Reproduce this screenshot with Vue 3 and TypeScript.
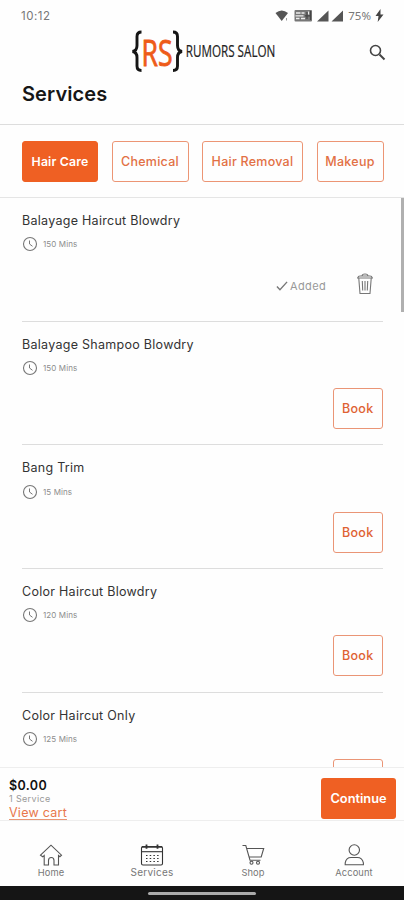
<script setup lang="ts">
interface Service {
  name: string
  mins: number
  added: boolean
}

const categories: string[] = ['Hair Care', 'Chemical', 'Hair Removal', 'Makeup']
const active = 'Hair Care'

const services: Service[] = [
  { name: 'Balayage Haircut Blowdry', mins: 150, added: true },
  { name: 'Balayage Shampoo Blowdry', mins: 150, added: false },
  { name: 'Bang Trim', mins: 15, added: false },
  { name: 'Color Haircut Blowdry', mins: 120, added: false },
  { name: 'Color Haircut Only', mins: 125, added: false },
]
</script>

<template>
  <div class="screen">
    <div class="status">
      <span class="time">10:12</span>
      <svg class="status-icons" width="70" height="14" viewBox="0 0 70 14">
        <path d="M0.500 4Q6.700 -1 13 4L6.700 12Z" fill="#555" />
        <path d="M11.500 9v2.500" stroke="#999" />
        <rect x="19.500" y="1" width="17.500" height="11.500" rx="1" fill="#777" />
        <path d="M21 4h4.500M26.500 4h3M21 9.500h3.500M26 9.500h4M33.500 2.500v3M20.500 6.800h8" stroke="#eee" stroke-width="1.300" />
        <path d="M30 6.800h5M32 3v7M35.500 2v9" stroke="#444" stroke-width="1.200" />
        <path d="M42 12.500 53.500 1.500v11zM56.500 12.500 68 1.500v11z" fill="#555" />
      </svg>
      <span class="battery">75%</span>
      <svg class="bolt" width="9" height="13" viewBox="0 0 9 13"><path d="M5.500 0 .5 7h3l-.8 6L8.500 5.500h-3z" fill="#444" /></svg>
    </div>

    <header class="brand">
      <svg class="logo" width="146" height="46" viewBox="0 0 146 46">
        <path d="M10.500 3C7 3 6 4.500 6 7.500v9c0 3.500-1.500 5.500-4.500 6 3 .5 4.500 2.500 4.500 6V37c0 3 1 4.500 4.500 4.500M42 3c3.500 0 4.500 1.500 4.500 4.500v9c0 3.500 1.500 5.500 4.500 6-3 .5-4.500 2.500-4.500 6V37c0 3-1 4.500-4.500 4.500" fill="none" stroke="#151515" stroke-width="2.900" />
        <text class="rs" x="10.500" y="36.500" textLength="31" lengthAdjust="spacingAndGlyphs">RS</text>
        <text class="salon" x="54.800" y="27.800" textLength="89.500" lengthAdjust="spacingAndGlyphs">RUMORS SALON</text>
      </svg>
      <svg class="search" width="17" height="17" viewBox="0 0 17 17" fill="none" stroke="#444">
        <circle cx="6.500" cy="6.500" r="5" stroke-width="1.600" /><path d="m10.500 10.500 5 5" stroke-width="2" />
      </svg>
    </header>
    <h1>Services</h1>

    <nav class="tabs">
      <button v-for="c in categories" :key="c" :class="{ active: c === active }">{{ c }}</button>
    </nav>

    <main class="list">
      <article v-for="s in services" :key="s.name" class="item">
        <h2>{{ s.name }}</h2>
        <div class="duration">
          <svg width="16" height="16" viewBox="0 0 16 16" fill="none" stroke="#777">
            <circle cx="8" cy="8" r="6.500" stroke-width="1.100" /><path d="M7.500 4.500V8l3 2.300" />
          </svg>
          <span>{{ s.mins }} Mins</span>
        </div>
        <div class="action">
          <template v-if="s.added">
            <svg class="check" width="12" height="12" viewBox="0 0 13 12" fill="none" stroke="#777" stroke-width="1.500"><path d="m1 6.500 3.300 3.500L12 1.500" /></svg>
            <span class="added">Added</span>
            <svg class="trash" width="18" height="22" viewBox="0 0 18 22" fill="none" stroke="#777" stroke-width="1.100">
              <path d="M1 5h16M2.800 5.500 4 20.500h10l1.200-15M2 4.500q0-1.500 2-1.500h10q2 0 2 1.500M6 3q0-2 3-2t3 2M6.300 8l.4 9.500M9 8v9.500M11.700 8l-.4 9.500" />
            </svg>
          </template>
          <button v-else class="book">Book</button>
        </div>
      </article>
      <span class="scrollbar"></span>
    </main>

    <section class="cart">
      <div>
        <div class="total">$0.00</div>
        <div class="count">1 Service</div>
        <a class="view">View cart</a>
      </div>
      <button class="continue">Continue</button>
    </section>

    <footer class="nav">
      <div class="nav-item">
        <svg width="24" height="24" viewBox="0 0 24 24"><path d="m1.500 12.200 10.500-10 10.500 10-1.600 1.500-1.400-1.200V22H15v-4.500c0-4-5.500-4-5.500 0V22H5.200v-9.500l-1.500 1.300z" /></svg>
        <span>Home</span>
      </div>
      <div class="nav-item current">
        <svg width="24" height="24" viewBox="0 0 24 24"><rect x="1.500" y="3.500" width="21" height="18.500" rx="1.500" /><path d="M2 8.700h20" /><path d="M2 3.800h20M6.500 1.500v4.200M17.500 1.500v4.200" stroke-width="1.800" /><path d="M6 12.500h13M6 15.500h13M6 18.500h13" stroke-dasharray="1.500 2.200" /></svg>
        <span>Services</span>
      </div>
      <div class="nav-item">
        <svg width="24" height="24" viewBox="0 0 24 24"><path d="M1.500 2.500h3.300l4.200 14.700h10.500M5.700 5.500h17L20.200 14H8.300" /><circle cx="10.500" cy="19.800" r="1.500" /><circle cx="17" cy="19.800" r="1.500" /></svg>
        <span>Shop</span>
      </div>
      <div class="nav-item">
        <svg width="24" height="24" viewBox="0 0 24 24"><circle cx="12.300" cy="7" r="5.200" /><path d="M3.200 21.800v-2Q4.200 14.500 9 14.500h6.400q4.800 0 6 5.300v2z" /></svg>
        <span>Account</span>
      </div>
    </footer>
    <div class="system"><span></span></div>
  </div>
</template>

<style>
body {
  background: #fefefe;
}
</style>

<style scoped>
* {
  box-sizing: border-box;
}
.screen {
  width: 404px;
  height: 900px;
  display: flex;
  flex-direction: column;
  overflow: hidden;
  background: #fefefe;
  font-family: Inter, sans-serif;
  color: #333;
}
button {
  font-family: inherit;
  margin: 0;
  padding: 0;
  white-space: nowrap;
}
.status {
  height: 28px;
  flex: none;
  display: flex;
  align-items: center;
  padding: 3px 20px 0 21px;
  color: #777;
}
.time {
  font-size: 11.5px;
  letter-spacing: 0.5px;
}
.status-icons {
  margin-left: auto;
}
.battery {
  font: 11.5px "Noto Sans", sans-serif;
  margin-left: 3px;
}
.bolt {
  margin-left: 4px;
}
.brand {
  height: 49px;
  flex: none;
  display: flex;
  align-items: flex-start;
  padding: 1px 18px 0 131px;
}
.logo {
  overflow: visible;
}
.rs {
  font: 37px "Open Sans", sans-serif;
  fill: #ee5b18;
  stroke: #ee5b18;
  stroke-width: 0.9px;
}
.salon {
  font: 17px "Open Sans", sans-serif;
  fill: #222;
  stroke: #222;
  stroke-width: 0.2px;
}
.search {
  margin: 15px 0 0 auto;
}
h1 {
  height: 47px;
  flex: none;
  margin: 0;
  padding: 3px 0 0 22px;
  font-size: 20px;
  line-height: 28px;
  font-weight: 600;
  letter-spacing: 0.1px;
  color: #161616;
}
.tabs {
  height: 74px;
  flex: none;
  display: flex;
  align-items: flex-start;
  justify-content: space-between;
  padding: 16px 20.5px 0 22px;
  border-top: 1px solid #ddd;
  border-bottom: 1px solid #e5e5e5;
}
.tabs button {
  height: 41px;
  width: 77px;
  border: 1px solid #ec9574;
  border-radius: 3px;
  background: #fefefe;
  color: #e27045;
  font-size: 12.5px;
  font-weight: 500;
  letter-spacing: 0.25px;
}
.tabs button:nth-child(1) {
  width: 76px;
}
.tabs button:nth-child(3) {
  width: 101px;
}
.tabs button:nth-child(4) {
  width: 67px;
}
.tabs .active {
  background: #ef6023;
  border-color: #ef6023;
  color: #fff;
  font-size: 12.3px;
  font-weight: 600;
  letter-spacing: 0.15px;
}
.list {
  flex: 1;
  min-height: 0;
  overflow: hidden;
  position: relative;
  padding: 0 21px 0 22px;
}
.item {
  height: 123.7px;
  border-bottom: 1px solid #ddd;
  padding-top: 14px;
}
h2 {
  margin: 0;
  font-size: 12.5px;
  line-height: 18px;
  font-weight: 400;
  letter-spacing: 0.28px;
}
.duration {
  display: flex;
  align-items: center;
  gap: 5px;
  height: 16px;
  margin-top: 6.4px;
  color: #8c8c8c;
  font-size: 8px;
  letter-spacing: 0.1px;
}
.action {
  height: 41px;
  margin-top: 11.8px;
  display: flex;
  justify-content: flex-end;
  align-items: center;
}
.book {
  width: 50.5px;
  height: 41px;
  border: 1px solid #ea9576;
  border-radius: 3px;
  background: #fefefe;
  color: #df6233;
  font-size: 12.5px;
  font-weight: 500;
  letter-spacing: 0.25px;
}
.check {
  margin-top: 2px;
}
.added {
  font-size: 11px;
  color: #999;
  margin: 3px 0 0 2px;
  letter-spacing: 0.35px;
}
.trash {
  margin: 0 9px 1px 30px;
}
.scrollbar {
  position: absolute;
  right: 0;
  top: 0;
  width: 3px;
  height: 114px;
  background: #b0b0b0;
}
.cart {
  height: 53px;
  flex: none;
  display: flex;
  justify-content: space-between;
  padding: 10px 8px 0 9px;
  border-top: 1px solid #eee;
}
.total {
  font-size: 12.5px;
  line-height: 15px;
  font-weight: 600;
  color: #111;
  letter-spacing: 0.4px;
}
.count {
  font-size: 9px;
  line-height: 11px;
  color: #999;
  letter-spacing: 0.35px;
}
.view {
  display: block;
  font-size: 12.5px;
  line-height: 17px;
  height: 16px;
  color: #e8774b;
  border-bottom: 1px solid #e99674;
  letter-spacing: 0.25px;
}
.continue {
  width: 75px;
  height: 41px;
  border: 0;
  border-radius: 3px;
  background: #ef6023;
  color: #fff;
  font-size: 12.8px;
  font-weight: 600;
}
.nav {
  height: 66px;
  flex: none;
  display: grid;
  grid-template-columns: repeat(4, 101px);
  border-top: 1px solid #eee;
  padding-top: 22px;
}
.nav-item {
  display: flex;
  flex-direction: column;
  align-items: center;
  font-size: 9.3px;
  line-height: 12px;
  color: #777;
  padding-left: 1px;
}
.nav-item span {
  letter-spacing: 0.1px;
}
.nav-item.current span {
  font-size: 10px;
  letter-spacing: 0.25px;
  margin-top: -1px;
}
.nav-item svg {
  fill: none;
  stroke: #555;
  stroke-width: 1.1;
}
.nav-item.current svg {
  stroke: #333;
}
.system {
  height: 14px;
  flex: none;
  background: #151515;
  display: flex;
  justify-content: center;
  align-items: center;
}
.system span {
  width: 108px;
  height: 3px;
  border-radius: 2px;
  background: #aaa;
}
</style>
